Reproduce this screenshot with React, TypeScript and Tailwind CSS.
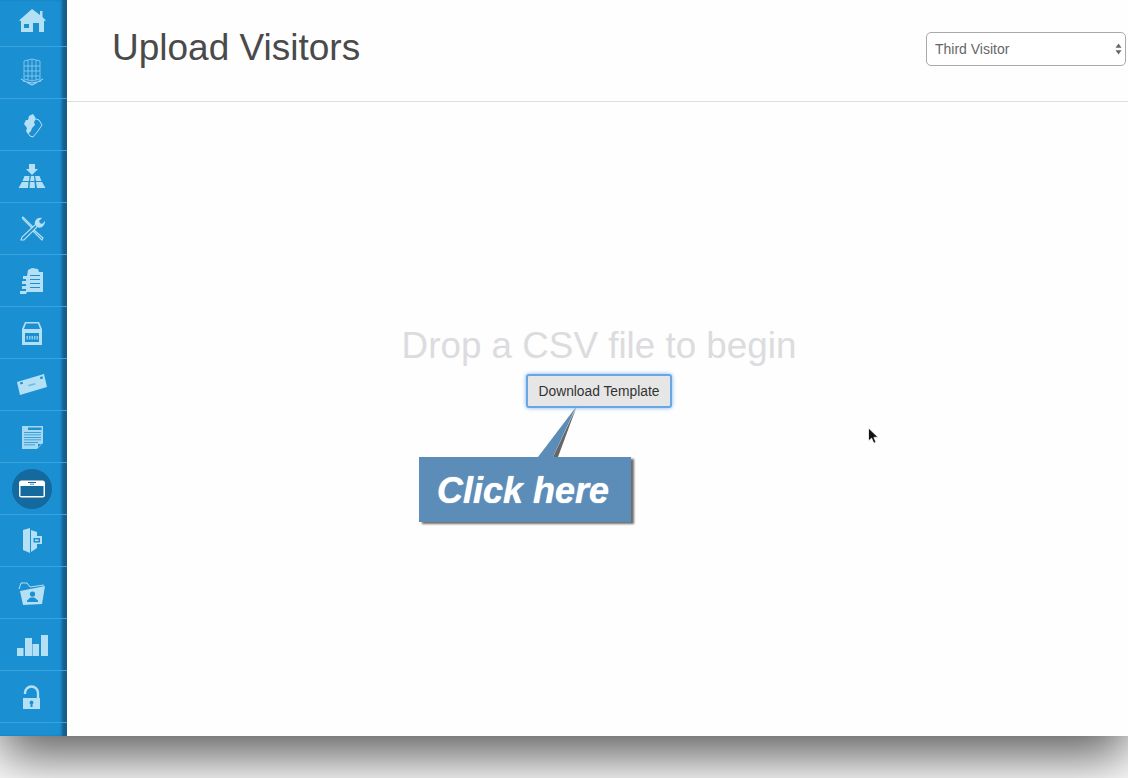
import React from 'react';

const FONT = "font-['Liberation_Sans',Arial,sans-serif]";

// icons are drawn on a 36 box, centred in their sidebar row
const ICONS: React.ReactNode[] = [
  // home
  <g key="home" fill="currentColor">
    <path fillRule="evenodd" d="M18 7 L26 13 V9 H28.5 V15 L32 18.5 L30 19 V30 H25 V21 H19 V30 H7 V19 L5 18.5 Z M10 22 V26 H15 V22 Z" />
  </g>,
  // building on a tray
  <g key="building" fill="none" stroke="currentColor" strokeWidth="0.8" opacity="0.8">
    <path d="M10 6 L18 4 L26 6 V24 L18 26 L10 24 Z" />
    <path d="M14 5 V25 M18 4 V26 M22 5 V25 M10 11 H26 M10 16 H26 M10 21 H26" />
    <path d="M7 24 L18 30 L29 24 M9 26 L18 28 L27 26" strokeWidth="1.1" />
  </g>,
  // hand with tag
  <g key="hand">
    <path fill="currentColor" d="M10 17 L12 13 L14 13 L15 9 L19 7 L21 10 L22 12 L20 15 L21 18 L18 21 L17 24 L14 27 L12 24 L13 21 Z" />
    <path fill="none" stroke="currentColor" strokeWidth="1" d="M22 12 L25 13 L28 18 L24 24 L19 30 L16 29 L14 26" />
  </g>,
  // arrow over floor tiles
  <g key="tiles" fill="currentColor">
    <path d="M15 5 H21 V10 H24 L18 16 L12 10 H15 Z" />
    <path d="M10.5 17 H15.5 L15 22 H8.5 Z M17 17 H20 L20.5 22 H16 Z M21 17 H25.5 L27.5 22 H22 Z M8 23 H14.5 L14 29 H4.5 Z M16 23 H20.5 L21 29 H15.5 Z M22 23 H28 L31.5 29 H23 Z" />
  </g>,
  // wrench and screwdriver
  <g key="tools">
    <path fill="none" stroke="currentColor" strokeWidth="1.1" d="M8 7 L9 6 L19 16 M8 7 L18 17 M20 19 L29 27 L28 29 L19 20" />
    <path fill="none" stroke="currentColor" strokeWidth="1.1" d="M21 14 L8 26 L7 29 L10 29 L23 16" />
    <path fill="currentColor" d="M21 14 C20 10 23 6 28 7 L25 10 L26 12 L28 13 L31 10 C31 15 27 18 23 16 Z" />
  </g>,
  // copier
  <g key="copier" fill="currentColor">
    <path fillRule="evenodd" d="M14 7 L18 5 L24 6 L25 9 H29 V29 H13 L12 31 H6 V28 H12 V26 H8 V23 H12 V21 H8 V18 H12 V16 H9 V13 H13 Z M16 12 V13 H26 V12 Z M16 16 V17 H26 V16 Z M16 20 V21 H26 V20 Z M16 24 V25 H26 V24 Z" />
  </g>,
  // archive box
  <g key="box" fill="currentColor">
    <path fillRule="evenodd" d="M11 7 H25 L28 14 V30 H8 V14 Z M12 8.5 L10 14 H26 L24 8.5 Z M11 18 V27 H25 V18 Z" />
    <path d="M12.5 21 H14 V24.5 H12.5 Z M15 21 H16.5 V24.5 H15 Z M17.5 21 H19 V24.5 H17.5 Z M20 21 H21.5 V24.5 H20 Z M22.5 21 H24 V24.5 H22.5 Z" opacity="0.75" />
  </g>,
  // envelope
  <g key="envelope">
    <path fill="currentColor" fillRule="evenodd" d="M3 15 L30 7 L33 20 L6 28 Z M6 15.5 L6.5 17.5 L9 16.8 L8.5 14.8 Z M26 10 L26.5 12.3 L29 11.6 L28.5 9.3 Z" />
    <path d="M14 18 L21 16 L21.5 17.5 L14.5 19.5 Z" fill="#1a8fd1" opacity="0.45" />
  </g>,
  // document
  <g key="doc" fill="currentColor">
    <path fillRule="evenodd" opacity="0.9" d="M8 7 H29 V24 L23 30 H8 Z M14 8.5 V11 H27.5 V8.5 Z M10 13 V13.7 H27 V13 Z M10 15.5 V16.2 H27 V15.5 Z M10 18 V18.7 H27 V18 Z M10 20.5 V21.2 H27 V20.5 Z M10 23 V23.7 H24 V23 Z M10 25.5 V26.2 H21 V25.5 Z M24 25 V28 L27.5 25 Z" />
  </g>,
  // visitor card, active row
  <g key="card">
    <rect x="5" y="9.5" width="26" height="17" rx="2.5" fill="#fff" />
    <rect x="6.5" y="15" width="23" height="10" fill="#14699f" />
    <path d="M14 11 H22 V12 H14 Z M16 12.8 H20 V13.6 H16 Z" fill="#14699f" />
  </g>,
  // filing cabinet
  <g key="cabinet" fill="currentColor">
    <path d="M9 7 L16 5 V30 L9 27 Z" />
    <path fillRule="evenodd" d="M17 7 L23 9 V13 H28 V21 H23 V25 L17 29 Z M19.5 15 V19.5 H26 V15 Z" />
    <path d="M21 16.5 H24.5 V18 H21 Z" />
  </g>,
  // folder with person
  <g key="folder" fill="currentColor">
    <path fillRule="evenodd" d="M6 16 L31 11 L28 29 L9 30 Z M18.5 16.5 A2.6 2.6 0 0 0 18.5 21.7 A2.6 2.6 0 0 0 18.5 16.5 Z M13 25.5 V27 H24 V25.5 L20.5 22.5 H16.5 Z" />
    <path fill="none" stroke="currentColor" strokeWidth="1" d="M5 14 L7 8 H13 L16 12 L30 10" />
  </g>,
  // bars
  <g key="bars" fill="currentColor">
    <path d="M3 21 H9.5 V29 H3 Z M11 11 H18 V29 H11 Z M18.5 17 H25 V29 H18.5 Z M27 8 H34 V29 H27 Z" />
  </g>,
  // lock
  <g key="lock">
    <path fill="none" stroke="currentColor" strokeWidth="2.4" d="M11 15 V14 A6.5 6.5 0 0 1 24 14 V19" />
    <path fill="currentColor" fillRule="evenodd" d="M9 19 H26 V30 H9 Z M17.5 21.5 A2 2 0 0 0 16.5 25.2 V28 H18.5 V25.2 A2 2 0 0 0 17.5 21.5 Z" />
  </g>,
];

function Sidebar() {
  return (
    <nav className="w-[67px] shrink-0 bg-[#1a8fd1] shadow-[inset_-6px_0_3px_-1px_rgba(20,60,90,0.6)] text-[#b4e0f6]">
      {ICONS.map((icon, i) => (
        <div
          key={i}
          className={
            i === 0
              ? 'h-[46px] pb-[6px] pr-[3px] flex items-center justify-center'
              : 'h-[52px] pr-[3px] flex items-center justify-center border-t border-[#38a3de]'
          }
        >
          {i === 9 ? (
            <div className="w-10 h-10 rounded-full bg-[#14699f] flex items-center justify-center">
              <svg viewBox="0 0 36 36" className="w-9 h-9">{icon}</svg>
            </div>
          ) : (
            <svg viewBox="0 0 36 36" className="w-9 h-9">{icon}</svg>
          )}
        </div>
      ))}
      <div className="h-[14px] border-t border-[#38a3de]" />
    </nav>
  );
}

function Header() {
  return (
    <header className="h-[102px] shrink-0 border-b border-[#dedede] flex items-center justify-between pl-[45px] pr-[2px] pb-[6px]">
      <h1 className="text-[37px] leading-10 font-normal text-[#4a4a4a]">Upload Visitors</h1>
      <div className="relative w-[200px] h-[34px] mt-[2px]">
        <select
          defaultValue="Third Visitor"
          className="appearance-none w-full h-full rounded-[5px] border border-[#aaaaaa] bg-white pl-2 pt-[2px] text-[14px] text-[#666666]"
        >
          <option>Third Visitor</option>
        </select>
        <svg viewBox="0 0 8 14" className="absolute right-[4px] top-[11px] w-[7px] h-[12px] text-[#666666]">
          <path d="M4 0.5 L7.5 5.5 H0.5 Z M4 13.5 L0.5 8.5 H7.5 Z" fill="currentColor" />
        </svg>
      </div>
    </header>
  );
}

function Callout() {
  return (
    <div className="absolute left-[-107px] top-[83px] w-[212px] h-[65px] bg-[#5b8db8] shadow-[3px_2px_2px_rgba(60,60,60,0.75)] flex items-center pl-[18px]">
      <svg viewBox="0 0 60 50" className="absolute left-[116px] top-[-50px] w-[60px] h-[50px] overflow-visible">
        <path d="M18 50 L41.5 0 L23 50 Z" fill="#666666" />
        <path d="M3 50 L41 0 L18 50 Z" fill="#5b8db8" />
      </svg>
      <span className="text-[36px] leading-none font-bold italic text-white mt-[2px] [text-shadow:0_0_1px_#ffffff]">Click here</span>
    </div>
  );
}

export default function App() {
  return (
    <div className={`h-[778px] bg-white overflow-hidden ${FONT}`}>
      <div className="h-[736px] flex bg-[#fefefe] shadow-[0_20px_50px_rgba(0,0,0,0.65)]">
        <Sidebar />
        <main className="relative flex-1 flex flex-col min-w-0">
          <Header />
          <div className="flex-1 flex flex-col items-center pt-[224px] pl-[3px]">
            <p className="text-[36.8px] leading-10 text-[#dcdcde]">Drop a CSV file to begin</p>
            <div className="relative mt-[8px]">
              <button className="h-[34px] w-[146px] pt-[2px] rounded-[3px] border-2 border-[#6aa6e4] bg-[#e6e6e6] text-[13.8px] text-[#333333] shadow-[0_0_4px_#7ab5f0]">
                Download Template
              </button>
              <Callout />
            </div>
          </div>
          <svg viewBox="0 0 12 18" className="absolute left-[800px] top-[427px] w-3 h-[18px]">
            <path d="M1.5 1 V14 L4.6 11.2 L6.8 16.2 L9 15.2 L6.9 10.4 L11 10.2 Z" fill="#111111" stroke="#ffffff" strokeWidth="0.8" />
          </svg>
        </main>
      </div>
    </div>
  );
}
